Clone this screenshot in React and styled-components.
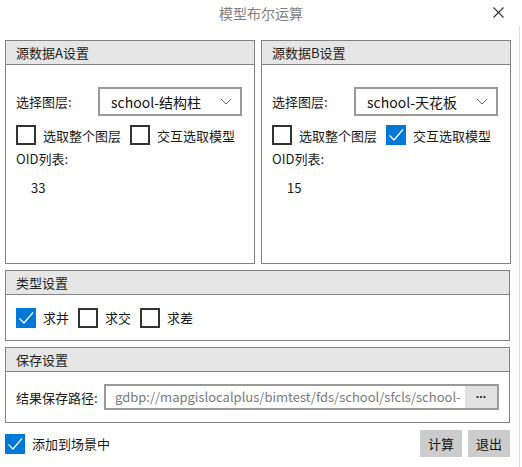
import React from "react";
import styled, { createGlobalStyle } from "styled-components";

const GlobalStyle = createGlobalStyle`
  html, body {
    margin: 0;
    padding: 0;
    background: #ffffff;
  }
  body {
    font-family: "Noto Sans CJK SC", "Noto Sans", sans-serif;
    font-size: 13px;
    color: #1a1a1a;
  }
`;

const Window = styled.div`
  width: 522px;
  height: 467px;
  background: #ffffff;
  overflow: hidden;
`;

const TitleBar = styled.div`
  position: relative;
  height: 26px;
  display: flex;
  align-items: center;
  justify-content: center;
  font-size: 14px;
  color: #808080;
`;

const CloseButton = styled.div`
  position: absolute;
  right: 17px;
  top: 5px;
  width: 14px;
  height: 14px;
  display: flex;
  align-items: center;
  justify-content: center;
`;

const Body = styled.div`
  width: 520px;
  height: 441px;
  border-right: 1px solid #dcdcdc;
  box-sizing: border-box;
  padding: 14px 9px 0 5px;
  display: flex;
  flex-direction: column;
  gap: 6px;
`;

const TopRow = styled.div`
  display: grid;
  grid-template-columns: 250px 250px;
  gap: 6px;
`;

const Panel = styled.div`
  border: 1px solid #828282;
  height: ${(p) => p.$h}px;
  box-sizing: border-box;
  display: flex;
  flex-direction: column;
`;

const PanelHeader = styled.div`
  height: 23px;
  flex: none;
  background: #e6e6e6;
  border-bottom: 1px solid #828282;
  display: flex;
  align-items: center;
  padding-left: 10px;
  color: #222;
`;

const PanelBody = styled.div`
  flex: 1;
  min-width: 0;
  padding: ${(p) => p.$pad || "0 12px 0 10px"};
  display: flex;
  flex-direction: column;
  justify-content: ${(p) => (p.$center ? "center" : "flex-start")};
`;

const LayerRow = styled.div`
  margin-top: 22px;
  display: grid;
  grid-template-columns: 82px 1fr;
  align-items: center;
`;

const SelectBox = styled.div`
  height: 29px;
  border: 2px solid #999999;
  box-sizing: border-box;
  display: flex;
  align-items: center;
  justify-content: space-between;
  padding: 0 8px 0 11px;
  font-size: 14px;
  color: #111;
`;

const CheckRow = styled.div`
  display: flex;
  align-items: center;
  gap: ${(p) => p.$gap || 9}px;
  margin-top: ${(p) => p.$mt || 0}px;
`;

const CheckItem = styled.label`
  display: flex;
  align-items: center;
  gap: 7px;
  white-space: nowrap;
`;

const Box = styled.span`
  width: 20px;
  height: 20px;
  box-sizing: border-box;
  flex: none;
  display: flex;
  align-items: center;
  justify-content: center;
  border: ${(p) => (p.$checked ? "none" : "2px solid #333333")};
  background: ${(p) => (p.$checked ? "#0078d7" : "#ffffff")};
`;

const FieldLabel = styled.div`
  margin-top: ${(p) => p.$mt || 0}px;
  line-height: 18px;
`;

const OidValue = styled.div`
  margin-top: 11px;
  padding-left: 15px;
  line-height: 18px;
`;

const PathRow = styled.div`
  display: grid;
  grid-template-columns: 88px minmax(0, 1fr);
  align-items: center;
`;

const PathInput = styled.div`
  height: 26px;
  min-width: 0;
  border: 2px solid #999999;
  box-sizing: border-box;
  display: flex;
  align-items: stretch;
`;

const PathText = styled.div`
  flex: 1;
  min-width: 0;
  overflow: hidden;
  white-space: nowrap;
  padding-left: 9px;
  font-size: 13px;
  line-height: 22px;
  color: #7a7a7a;
`;

const BrowseButton = styled.div`
  width: 32px;
  flex: none;
  background: #e1e1e1;
  display: flex;
  align-items: center;
  justify-content: center;
  font-family: "Liberation Sans", Arial, sans-serif;
  font-weight: bold;
  font-size: 12px;
  color: #222;
  letter-spacing: -0.5px;
`;

const Footer = styled.div`
  margin-top: 1px;
  display: flex;
  align-items: center;
  justify-content: space-between;
`;

const Buttons = styled.div`
  display: flex;
  gap: 6px;
`;

const Button = styled.button`
  width: 42px;
  height: 27px;
  border: none;
  background: #cccccc;
  font-family: inherit;
  font-size: 13px;
  color: #111;
  padding: 0;
`;

function Check() {
  return (
    <svg width="20" height="20" viewBox="0 0 20 20">
      <polyline
        points="3.5,10.5 8,15 17,4.5"
        fill="none"
        stroke="#ffffff"
        strokeWidth="1.3"
      />
    </svg>
  );
}

function CheckBox({ checked, label }) {
  return (
    <CheckItem>
      <Box $checked={checked}>{checked && <Check />}</Box>
      <span>{label}</span>
    </CheckItem>
  );
}

function Chevron() {
  return (
    <svg width="12" height="7" viewBox="0 0 12 7">
      <polyline points="1,1 6,6 11,1" fill="none" stroke="#666" strokeWidth="1" />
    </svg>
  );
}

function SourcePanel({ title, layer, whole, interactive, oid }) {
  return (
    <Panel $h={224}>
      <PanelHeader>{title}</PanelHeader>
      <PanelBody>
        <LayerRow>
          <span>选择图层:</span>
          <SelectBox>
            <span>{layer}</span>
            <Chevron />
          </SelectBox>
        </LayerRow>
        <CheckRow $mt={9} $gap={9}>
          <CheckBox checked={whole} label="选取整个图层" />
          <CheckBox checked={interactive} label="交互选取模型" />
        </CheckRow>
        <FieldLabel $mt={5}>OID列表:</FieldLabel>
        <OidValue>{oid}</OidValue>
      </PanelBody>
    </Panel>
  );
}

export default function App() {
  return (
    <>
      <GlobalStyle />
      <Window>
        <TitleBar>
          模型布尔运算
          <CloseButton>
            <svg width="11" height="11" viewBox="0 0 11 11">
              <line x1="0.5" y1="0.5" x2="10.5" y2="10.5" stroke="#333" strokeWidth="1.1" />
              <line x1="10.5" y1="0.5" x2="0.5" y2="10.5" stroke="#333" strokeWidth="1.1" />
            </svg>
          </CloseButton>
        </TitleBar>
        <Body>
          <TopRow>
            <SourcePanel
              title="源数据A设置"
              layer="school-结构柱"
              whole={false}
              interactive={false}
              oid="33"
            />
            <SourcePanel
              title="源数据B设置"
              layer="school-天花板"
              whole={false}
              interactive={true}
              oid="15"
            />
          </TopRow>
          <Panel $h={71}>
            <PanelHeader>类型设置</PanelHeader>
            <PanelBody $center>
              <CheckRow $gap={9}>
                <CheckBox checked={true} label="求并" />
                <CheckBox checked={false} label="求交" />
                <CheckBox checked={false} label="求差" />
              </CheckRow>
            </PanelBody>
          </Panel>
          <Panel $h={76}>
            <PanelHeader>保存设置</PanelHeader>
            <PanelBody $center $pad="0 10px 0 10px">
              <PathRow>
                <span>结果保存路径:</span>
                <PathInput>
                  <PathText>gdbp://mapgislocalplus/bimtest/fds/school/sfcls/school-</PathText>
                  <BrowseButton>···</BrowseButton>
                </PathInput>
              </PathRow>
            </PanelBody>
          </Panel>
          <Footer>
            <CheckBox checked={true} label="添加到场景中" />
            <Buttons>
              <Button>计算</Button>
              <Button>退出</Button>
            </Buttons>
          </Footer>
        </Body>
      </Window>
    </>
  );
}
